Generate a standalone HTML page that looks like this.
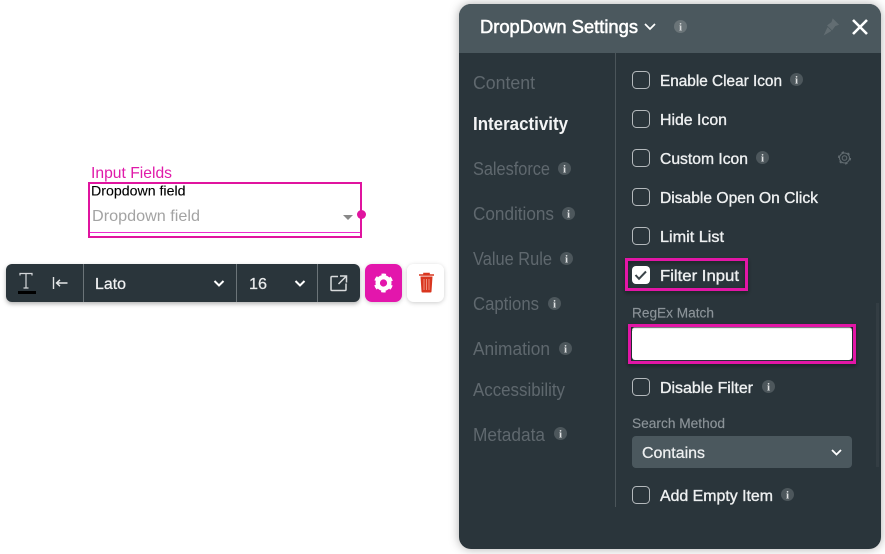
<!DOCTYPE html>
<html>
<head>
<meta charset="utf-8">
<style>
html,body{margin:0;padding:0;background:#fff;width:885px;height:554px;overflow:hidden}
svg{position:absolute;left:0;top:0;display:block}
text{font-family:"Liberation Sans",sans-serif;white-space:pre}
.nav{font-size:18px;fill:#5f686e}
.lab{font-size:15.5px;fill:#eef0f1;stroke:#eef0f1;stroke-width:.35}
.sub{font-size:13.5px;fill:#8b9398;stroke:#8b9398;stroke-width:.15}
.i{font-family:"Liberation Serif",serif;font-size:11px;font-weight:bold;text-anchor:middle}
</style>
</head>
<body>
<svg width="885" height="554" viewBox="0 0 885 554" xmlns="http://www.w3.org/2000/svg">
<defs>
<filter id="ps" x="-10%" y="-10%" width="120%" height="120%"><feDropShadow dx="0" dy="0" stdDeviation="5" flood-color="#000" flood-opacity=".32"/></filter>
<filter id="ts" x="-10%" y="-30%" width="120%" height="170%"><feDropShadow dx="0" dy="2" stdDeviation="2" flood-color="#000" flood-opacity=".3"/></filter>
<filter id="bs" x="-30%" y="-30%" width="160%" height="170%"><feDropShadow dx="0" dy="1" stdDeviation="2" flood-color="#000" flood-opacity=".2"/></filter>
<filter id="hs" x="-10%" y="-30%" width="120%" height="170%"><feDropShadow dx="0" dy="2" stdDeviation="2" flood-color="#000" flood-opacity=".45"/></filter>
</defs>

<!-- canvas element -->
<text x="91" y="178" font-size="16" fill="#e01aa9" textLength="81" lengthAdjust="spacingAndGlyphs">Input Fields</text>
<rect x="89" y="183" width="272" height="54" fill="none" stroke="#e0149f" stroke-width="2"/>
<text x="91" y="195.500" font-size="13.500" fill="#000" stroke="#000" stroke-width=".1" textLength="94.500" lengthAdjust="spacingAndGlyphs">Dropdown field</text>
<text x="92" y="221" font-size="16" fill="#a3a3a3" textLength="108" lengthAdjust="spacingAndGlyphs">Dropdown field</text>
<path d="M343 215h10l-5 5z" fill="#888"/>
<rect x="90" y="232" width="270" height="1" fill="#ec2ccf"/>
<circle cx="361.500" cy="214.500" r="4.500" fill="#e0149f"/>

<!-- toolbar -->
<rect x="6" y="264" width="354" height="38" rx="6" fill="#2a343a" filter="url(#ts)"/>
<rect x="83" y="264" width="1" height="38" fill="#6b7478"/>
<rect x="236" y="264" width="1" height="38" fill="#6b7478"/>
<rect x="317" y="264" width="1" height="38" fill="#6b7478"/>
<path d="M20 275.500v-2h12v2M26 273.500v14.500M23.500 288h5" fill="none" stroke="#d5d8da" stroke-width="1.200"/>
<rect x="18" y="291" width="18" height="3" fill="#000"/>
<path d="M53.500 277v12M67.500 283h-11M60 279.800l-3.500 3.200 3.500 3.200" fill="none" stroke="#e4e6e7" stroke-width="1.400"/>
<text x="95" y="289" font-size="15.500" fill="#f1f2f3" stroke="#f1f2f3" stroke-width=".25" textLength="31" lengthAdjust="spacingAndGlyphs">Lato</text>
<path d="M214.500 281l4.500 4.500 4.500-4.500" fill="none" stroke="#fff" stroke-width="2"/>
<text x="249" y="289" font-size="15.500" fill="#e8eaeb" stroke="#e8eaeb" stroke-width=".25" textLength="18" lengthAdjust="spacingAndGlyphs">16</text>
<path d="M295.500 281l4.500 4.500 4.500-4.500" fill="none" stroke="#fff" stroke-width="2"/>
<path d="M338 276.500h-6a1 1 0 0 0-1 1v12a1 1 0 0 0 1 1h13a1 1 0 0 0 1-1v-6M340 276h6.500v6.500M346 276.500l-7.500 7.500" fill="none" stroke="#d8dbdc" stroke-width="1.500"/>

<!-- gear button -->
<rect x="365" y="264" width="37" height="38" rx="7" fill="#e315ac" filter="url(#bs)"/>
<circle cx="383.500" cy="283" r="5.800" fill="none" stroke="#fff" stroke-width="4.400"/>
<circle cx="383.500" cy="283" r="8.400" fill="none" stroke="#fff" stroke-width="2.200" stroke-dasharray="4.400 4.400" transform="rotate(15 383.500 283)"/>

<!-- trash button -->
<rect x="407" y="264" width="37" height="38" rx="7" fill="#fff" filter="url(#bs)"/>
<path d="M419 275h15M424 275v-1.500h5v1.500" fill="none" stroke="#d9361f" stroke-width="1.600"/>
<path d="M420.500 276.500h12l-1 15a1 1 0 0 1-1 1h-8a1 1 0 0 1-1-1z" fill="#d9361f"/>
<path d="M424 279v11M426.500 279v11M429 279v11" stroke="#f3a593" stroke-width=".8"/>

<!-- panel -->
<path d="M471 4h398a12 12 0 0 1 12 12v521a12 12 0 0 1-12 12h-398a12 12 0 0 1-12-12v-521a12 12 0 0 1 12-12z" fill="#2a343a" filter="url(#ps)"/>
<path d="M471 4h398a12 12 0 0 1 12 12v37h-422v-37a12 12 0 0 1 12-12z" fill="#4b585e"/>
<text x="480" y="33" font-size="18" fill="#fff" stroke="#fff" stroke-width=".55" textLength="158" lengthAdjust="spacingAndGlyphs">DropDown Settings</text>
<path d="M645 24l5 5 5-5" fill="none" stroke="#fff" stroke-width="1.700"/>
<circle cx="680.500" cy="26.500" r="6.500" fill="#6a7478"/>
<text class="i" x="680.500" y="30.500" fill="#d8dbdc">i</text>
<path d="M833 19.500l5 5-3 1-3 4-4-4 4-3zM828 27.500l-3 6.500 6-3.500" fill="#626d72" stroke="#626d72" stroke-width="1.200"/>
<path d="M853 20l14 14M867 20l-14 14" stroke="#fff" stroke-width="2.600"/>

<rect x="615" y="53" width="1" height="454" fill="#4b555a"/>
<rect x="876" y="303" width="3" height="164" fill="#333d43"/>

<!-- nav -->
<text class="nav" x="473" y="89" textLength="62" lengthAdjust="spacingAndGlyphs">Content</text>
<text x="473" y="130" font-size="18" font-weight="bold" fill="#f3f4f5" textLength="95" lengthAdjust="spacingAndGlyphs">Interactivity</text>
<text class="nav" x="473" y="175" textLength="77" lengthAdjust="spacingAndGlyphs">Salesforce</text>
<text class="nav" x="473" y="220" textLength="81" lengthAdjust="spacingAndGlyphs">Conditions</text>
<text class="nav" x="473" y="265" textLength="79" lengthAdjust="spacingAndGlyphs">Value Rule</text>
<text class="nav" x="473" y="310" textLength="66" lengthAdjust="spacingAndGlyphs">Captions</text>
<text class="nav" x="473" y="355" textLength="77" lengthAdjust="spacingAndGlyphs">Animation</text>
<text class="nav" x="473" y="396" textLength="92" lengthAdjust="spacingAndGlyphs">Accessibility</text>
<text class="nav" x="473" y="441" textLength="72" lengthAdjust="spacingAndGlyphs">Metadata</text>

<g fill="#4d575c">
<circle cx="564.500" cy="168.500" r="6.500"/><circle cx="568.500" cy="213.500" r="6.500"/><circle cx="566.500" cy="258.500" r="6.500"/>
<circle cx="554.500" cy="303.500" r="6.500"/><circle cx="565.500" cy="348.500" r="6.500"/><circle cx="560.500" cy="433.500" r="6.500"/>
<circle cx="796.500" cy="79.500" r="6.500"/><circle cx="762.500" cy="157.500" r="6.500"/><circle cx="768.500" cy="386.500" r="6.500"/><circle cx="787.500" cy="494.500" r="6.500"/>
</g>
<g fill="#e2e4e5">
<text class="i" x="564.500" y="172.500">i</text><text class="i" x="568.500" y="217.500">i</text><text class="i" x="566.500" y="262.500">i</text>
<text class="i" x="554.500" y="307.500">i</text><text class="i" x="565.500" y="352.500">i</text><text class="i" x="560.500" y="437.500">i</text>
<text class="i" x="796.500" y="83.500">i</text><text class="i" x="762.500" y="161.500">i</text><text class="i" x="768.500" y="390.500">i</text><text class="i" x="787.500" y="498.500">i</text>
</g>

<!-- checkboxes -->
<g fill="none" stroke="#b4b9bc" stroke-width="1">
<rect x="632.500" y="71.500" width="17" height="17" rx="4"/>
<rect x="632.500" y="110.500" width="17" height="17" rx="4"/>
<rect x="632.500" y="149.500" width="17" height="17" rx="4"/>
<rect x="632.500" y="188.500" width="17" height="17" rx="4"/>
<rect x="632.500" y="227.500" width="17" height="17" rx="4"/>
<rect x="632.500" y="378.500" width="17" height="17" rx="4"/>
<rect x="632.500" y="486.500" width="17" height="17" rx="4"/>
</g>

<text class="lab" x="660" y="86" textLength="122" lengthAdjust="spacingAndGlyphs">Enable Clear Icon</text>
<text class="lab" x="660" y="125" textLength="67" lengthAdjust="spacingAndGlyphs">Hide Icon</text>
<text class="lab" x="660" y="164" textLength="88" lengthAdjust="spacingAndGlyphs">Custom Icon</text>
<text class="lab" x="660" y="203" textLength="158" lengthAdjust="spacingAndGlyphs">Disable Open On Click</text>
<text class="lab" x="660" y="242" textLength="64" lengthAdjust="spacingAndGlyphs">Limit List</text>
<text class="lab" x="660" y="393" textLength="93" lengthAdjust="spacingAndGlyphs">Disable Filter</text>
<text class="lab" x="660" y="501" textLength="113" lengthAdjust="spacingAndGlyphs">Add Empty Item</text>

<!-- small gear -->
<circle cx="844.500" cy="158" r="2.300" fill="none" stroke="#626c71" stroke-width="1"/>
<circle cx="844.500" cy="158" r="5" fill="none" stroke="#626c71" stroke-width="1"/>
<circle cx="844.500" cy="158" r="6" fill="none" stroke="#626c71" stroke-width="1.200" stroke-dasharray="2.500 3.780"/>

<!-- highlight filter input -->
<rect x="626.500" y="259.500" width="120" height="30" fill="none" stroke="#e315a6" stroke-width="3" filter="url(#hs)"/>
<rect x="632" y="266" width="18" height="18" rx="4" fill="#fff"/>
<path d="M635.500 275l3.500 3.800 7-7.300" fill="none" stroke="#3a4449" stroke-width="2"/>
<text class="lab" x="660" y="281" textLength="79" lengthAdjust="spacingAndGlyphs">Filter Input</text>

<text class="sub" x="632" y="317.500" textLength="82" lengthAdjust="spacingAndGlyphs">RegEx Match</text>
<rect x="629.500" y="325.500" width="225" height="37" fill="none" stroke="#e315a6" stroke-width="3" filter="url(#hs)"/>
<rect x="632" y="328" width="220" height="32" rx="3" fill="#fff"/>
<path d="M632.500 331v-1a2 2 0 0 1 2-2h215a2 2 0 0 1 2 2v1" fill="none" stroke="#d9d9d9" stroke-width="1"/>

<text class="sub" x="632" y="428" textLength="93" lengthAdjust="spacingAndGlyphs">Search Method</text>
<rect x="632" y="436" width="220" height="32" rx="4" fill="#4b585e"/>
<text x="642" y="458" font-size="15.500" fill="#eef0f1" stroke="#eef0f1" stroke-width=".25" textLength="63" lengthAdjust="spacingAndGlyphs">Contains</text>
<path d="M832 450l4.500 4.500 4.500-4.500" fill="none" stroke="#fff" stroke-width="1.800"/>
</svg>
</body>
</html>
